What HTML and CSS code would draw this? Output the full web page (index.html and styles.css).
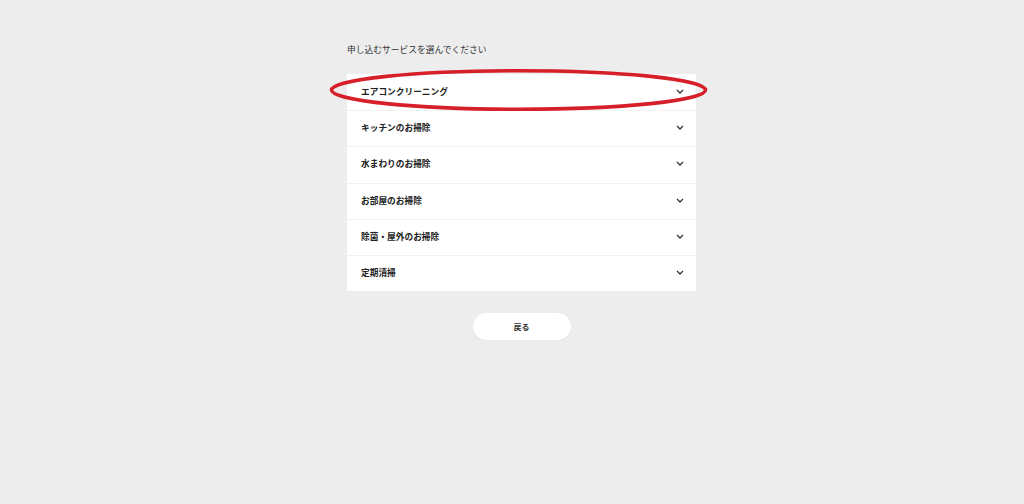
FILE: index.html
```html
<!DOCTYPE html>
<html lang="ja">
<head>
<meta charset="utf-8">
<link rel="stylesheet" href="styles.css">
</head>
<body>
<main class="page">
  <p class="lead">申し込むサービスを選んでください</p>
  <div class="panel">
    <ul class="list">
      <li class="row"><span class="label">エアコンクリーニング</span><svg class="chev" viewBox="0 0 8 5"><path d="M1 1l3 3 3-3"/></svg></li>
      <li class="row"><span class="label">キッチンのお掃除</span><svg class="chev" viewBox="0 0 8 5"><path d="M1 1l3 3 3-3"/></svg></li>
      <li class="row"><span class="label">水まわりのお掃除</span><svg class="chev" viewBox="0 0 8 5"><path d="M1 1l3 3 3-3"/></svg></li>
      <li class="row"><span class="label">お部屋のお掃除</span><svg class="chev" viewBox="0 0 8 5"><path d="M1 1l3 3 3-3"/></svg></li>
      <li class="row"><span class="label">除菌・屋外のお掃除</span><svg class="chev" viewBox="0 0 8 5"><path d="M1 1l3 3 3-3"/></svg></li>
      <li class="row"><span class="label">定期清掃</span><svg class="chev" viewBox="0 0 8 5"><path d="M1 1l3 3 3-3"/></svg></li>
    </ul>
    <svg class="mark" viewBox="0 0 380 46"><ellipse cx="189.5" cy="23" rx="187" ry="19.3"/></svg>
  </div>
  <div class="actions"><button class="back">戻る</button></div>
</main>
</body>
</html>
```

FILE: styles.css
```css
html, body {
  margin: 0;
  padding: 0;
  background: #ededed;
  font-family: "Noto Sans CJK JP", "Noto Sans", sans-serif;
}
.page {
  width: 349px;
  margin-left: 347px;
  padding-top: 43px;
}
.lead {
  margin: 0;
  font-size: 8.75px;
  line-height: 14px;
  color: #333;
}
.panel {
  position: relative;
  margin-top: 17px;
  background: #fff;
}
.list {
  list-style: none;
  margin: 0;
  padding: 0;
}
.row {
  box-sizing: border-box;
  height: 36.2px;
  display: flex;
  align-items: center;
  justify-content: space-between;
  padding: 0 12px 2px 14px;
  border-top: 1px solid #f1f1f1;
}
.row:first-child {
  border-top: none;
}
.label {
  font-size: 8.7px;
  font-weight: 700;
  color: #222;
}
.chev {
  width: 8px;
  height: 5px;
  fill: none;
  stroke: #333;
  stroke-width: 1.3;
}
.mark {
  position: absolute;
  left: -18px;
  top: -7px;
  width: 380px;
  height: 46px;
  fill: none;
  stroke: #d61f29;
  stroke-width: 3.6;
}
.actions {
  display: flex;
  justify-content: center;
  margin-top: 22px;
}
.back {
  width: 98px;
  height: 27px;
  border: none;
  border-radius: 14px;
  background: #fff;
  font-family: inherit;
  font-size: 8px;
  font-weight: 700;
  color: #333;
  box-shadow: 0 1px 2px rgba(0,0,0,0.05);
}
```
